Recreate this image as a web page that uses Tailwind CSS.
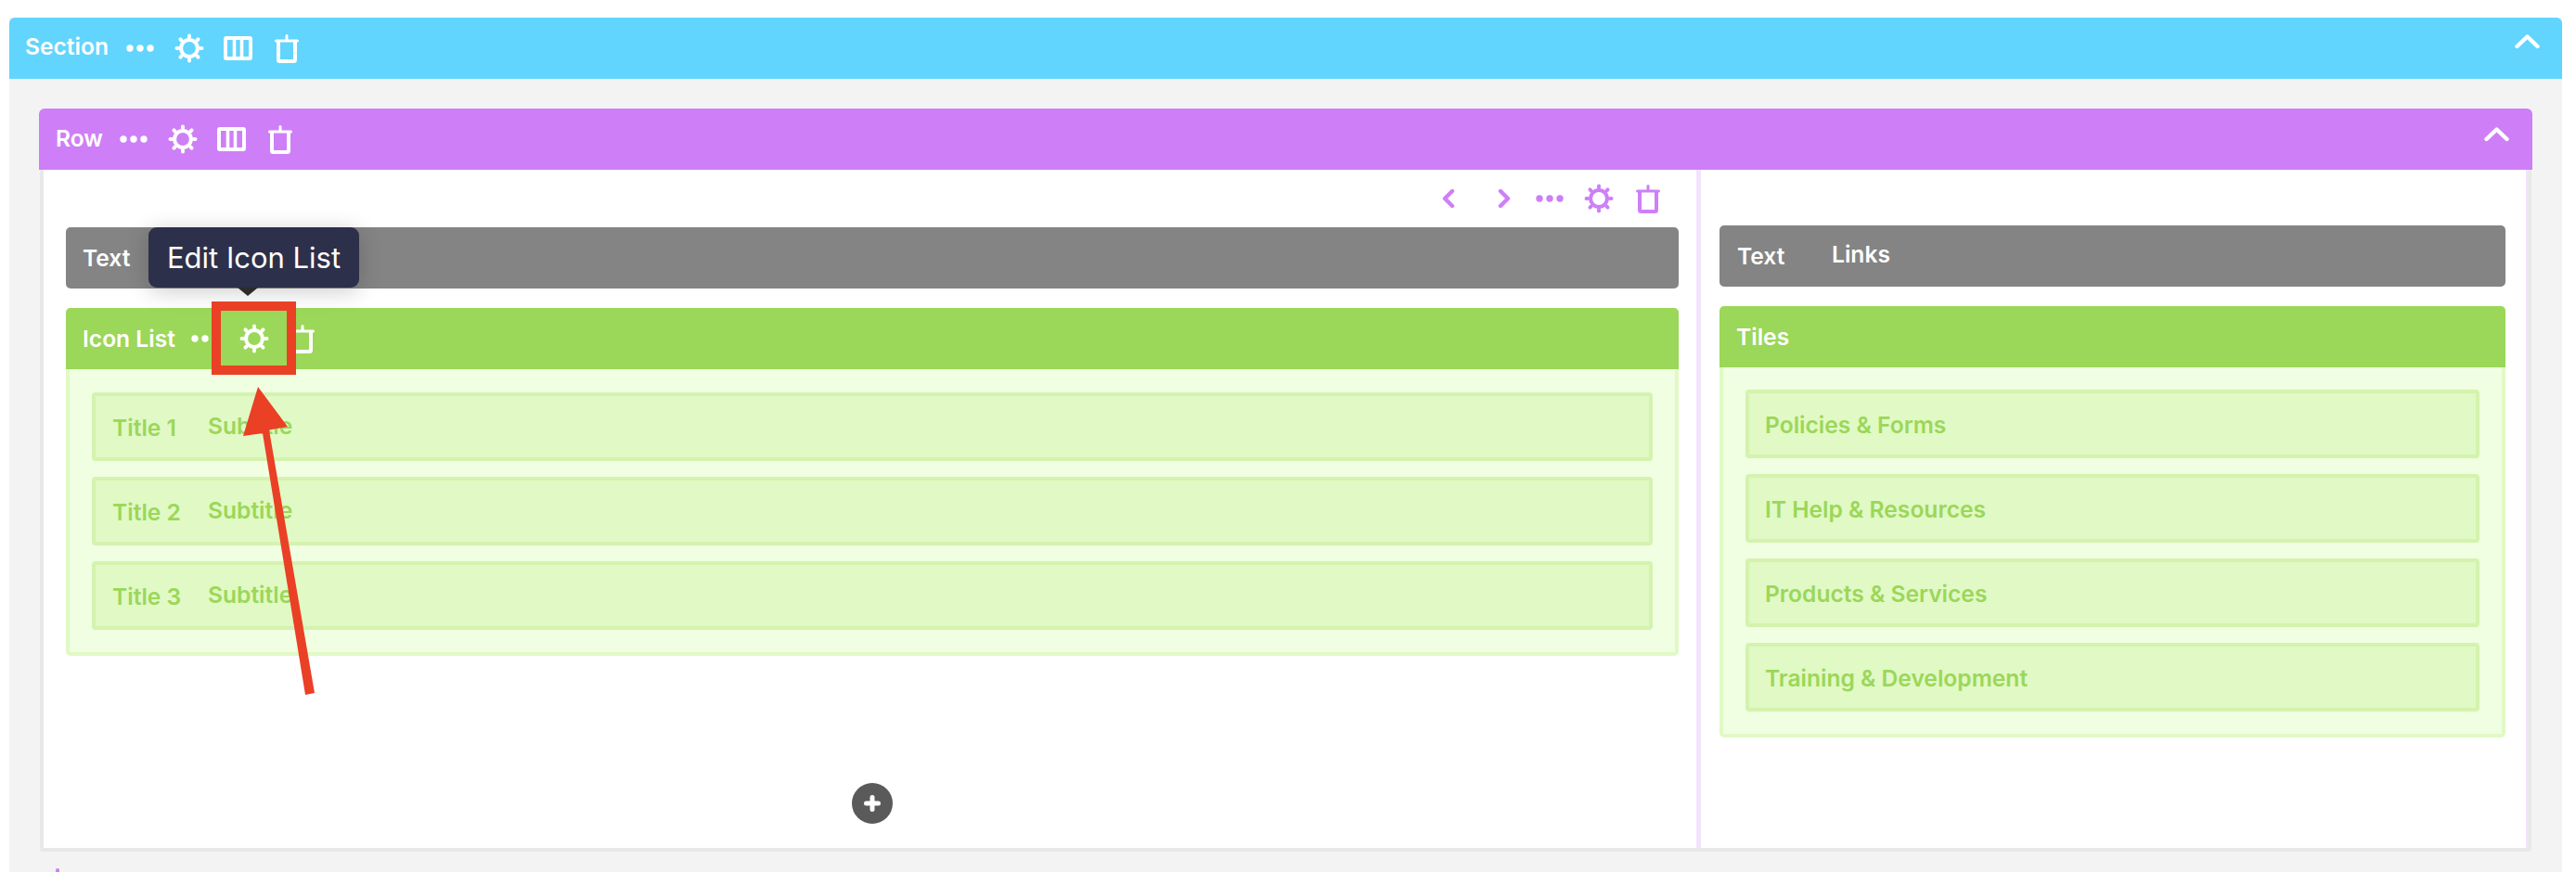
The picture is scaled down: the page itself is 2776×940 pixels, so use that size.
<!DOCTYPE html>
<html lang="en">
<head>
  <meta charset="UTF-8">
  <title>Edit Icon List</title>
  <script src="https://cdn.jsdelivr.net/npm/@tailwindcss/browser@4"></script>
</head>
<body class="bg-white font-['Inter',sans-serif] overflow-hidden">

  <!-- Shared icons -->
  <svg class="hidden">
    <symbol id="gear" viewBox="0 0 32 32">
      <circle cx="16" cy="16" r="8.9" fill="none" stroke="currentColor" stroke-width="4"/>
      <path d="M16 4V2.5M16 28V29.5M4 16H2.5M28 16H29.5M7.5 7.5L6.45 6.45M24.5 24.5L25.55 25.55M7.5 24.5L6.45 25.55M24.5 7.5L25.55 6.45" fill="none" stroke="currentColor" stroke-width="4" stroke-linecap="round"/>
    </symbol>
    <symbol id="cols" viewBox="0 0 31 26">
      <rect x="2" y="2" width="27" height="22" rx="1" fill="none" stroke="currentColor" stroke-width="4"/>
      <path d="M11.5 2V24M19.5 2V24" stroke="currentColor" stroke-width="3.6"/>
    </symbol>
    <symbol id="trash" viewBox="0 0 26 31">
      <path d="M1.5 7H24.5M13 1.5V6" fill="none" stroke="currentColor" stroke-width="3" stroke-linecap="round"/>
      <path d="M4 7V27.5Q4 29 5.5 29H20.5Q22 29 22 27.5V7" fill="none" stroke="currentColor" stroke-width="4"/>
    </symbol>
    <symbol id="dots" viewBox="0 0 30 10">
      <circle cx="4" cy="5" r="3.7" fill="currentColor"/><circle cx="15" cy="5" r="3.7" fill="currentColor"/><circle cx="26" cy="5" r="3.7" fill="currentColor"/>
    </symbol>
    <symbol id="up" viewBox="0 0 27 17">
      <path d="M2.5 14L13.5 3.5L24.5 14" fill="none" stroke="currentColor" stroke-width="4.4" stroke-linecap="round" stroke-linejoin="round"/>
    </symbol>
  </svg>

  <div class="relative w-[2776px] h-[940px]">
    <!-- Section -->
    <div class="absolute left-[10px] top-[19px] w-[2751px] h-[921px] bg-[#f3f3f3]">
      <div class="h-[66px] rounded-t-[6px] bg-[#61d5fd] text-white flex items-center pl-[17px]">
        <span class="text-[24.6px] font-semibold leading-none w-[109px] -mt-[3px]">Section</span>
        <svg class="w-[30px] h-[10px]"><use href="#dots"/></svg>
        <svg class="w-[32px] h-[32px] ml-[22px]"><use href="#gear"/></svg>
        <svg class="w-[31px] h-[26px] ml-[21px]"><use href="#cols"/></svg>
        <svg class="w-[26px] h-[31px] ml-[24px]"><use href="#trash"/></svg>
        <svg class="w-[27px] h-[17px] ml-auto mr-[24px] -mt-[16px]"><use href="#up"/></svg>
      </div>

      <!-- Row -->
      <div class="ml-[32px] mt-[32px] w-[2687px]">
        <div class="h-[66px] rounded-t-[6px] bg-[#ce7ff8] text-white flex items-center pl-[18px]">
          <span class="text-[24.6px] font-semibold leading-none w-[69px] -mt-[1px]">Row</span>
          <svg class="w-[30px] h-[10px]"><use href="#dots"/></svg>
          <svg class="w-[32px] h-[32px] ml-[22px]"><use href="#gear"/></svg>
          <svg class="w-[31px] h-[26px] ml-[21px]"><use href="#cols"/></svg>
          <svg class="w-[26px] h-[31px] ml-[24px]"><use href="#trash"/></svg>
          <svg class="w-[27px] h-[17px] ml-auto mr-[25px] -mt-[12px]"><use href="#up"/></svg>
        </div>

        <div class="mx-px h-[735px] flex bg-white border-x-4 border-b-4 border-[#e8e8e8] rounded-b-[4px]">
          <!-- Left column -->
          <div class="w-[1781px] h-full pl-[24px] pr-[19px] flex flex-col">
            <div class="h-[62px] flex items-center justify-end text-[#ce7ff8] pr-[20px]">
              <svg class="w-[14px] h-[22px] mr-[46px]" viewBox="0 0 14 22"><path d="M11 3L3 11L11 19" fill="none" stroke="currentColor" stroke-width="4.4" stroke-linecap="round" stroke-linejoin="round"/></svg>
              <svg class="w-[14px] h-[22px] mr-[27px]" viewBox="0 0 14 22"><path d="M3 3L11 11L3 19" fill="none" stroke="currentColor" stroke-width="4.4" stroke-linecap="round" stroke-linejoin="round"/></svg>
              <svg class="w-[30px] h-[10px]"><use href="#dots"/></svg>
              <svg class="w-[32px] h-[32px] ml-[22px]"><use href="#gear"/></svg>
              <svg class="w-[26px] h-[31px] ml-[24px]"><use href="#trash"/></svg>
            </div>

            <div class="h-[66px] shrink-0 rounded-[5px] bg-[#848484] text-white flex items-center pl-[18px]">
              <span class="text-[24.6px] font-semibold leading-none">Text</span>
            </div>

            <div class="mt-[21px] rounded-[5px] bg-[#e1f9c5] pb-[4px]">
              <div class="h-[66px] rounded-t-[5px] bg-[#9bd758] text-white flex items-center pl-[18px]">
                <span class="text-[24.6px] font-semibold leading-none w-[117px]">Icon List</span>
                <svg class="w-[30px] h-[10px]"><use href="#dots"/></svg>
                <svg class="w-[32px] h-[32px] ml-[22px]"><use href="#gear"/></svg>
                <svg class="w-[26px] h-[31px] ml-[23px]"><use href="#trash"/></svg>
              </div>
              <div class="mx-[4px] bg-[#f0fee2] px-[24px] pt-[25px] pb-[24px] flex flex-col gap-[17px] text-[#9bd758]">
                <div class="h-[74px] rounded-[4px] border-4 border-[#d4f3ae] bg-[#e1f9c5] flex items-center pl-[18px] text-[24.6px] font-semibold leading-none">
                  <span class="w-[103px] mt-[2px]">Title 1</span><span class="-mt-[2px]">Subtitle</span>
                </div>
                <div class="h-[74px] rounded-[4px] border-4 border-[#d4f3ae] bg-[#e1f9c5] flex items-center pl-[18px] text-[24.6px] font-semibold leading-none">
                  <span class="w-[103px] mt-[2px]">Title 2</span><span class="-mt-[2px]">Subtitle</span>
                </div>
                <div class="h-[74px] rounded-[4px] border-4 border-[#d4f3ae] bg-[#e1f9c5] flex items-center pl-[18px] text-[24.6px] font-semibold leading-none">
                  <span class="w-[103px] mt-[2px]">Title 3</span><span class="-mt-[2px]">Subtitle</span>
                </div>
              </div>
            </div>

            <button class="mt-auto mb-[26px] ml-[847px] w-[44px] h-[44px] rounded-full bg-[#5a5a5a] flex items-center justify-center">
              <svg class="w-[18px] h-[18px]" viewBox="0 0 18 18"><path d="M9 2.5V15.5M2.5 9H15.5" stroke="#fff" stroke-width="5" stroke-linecap="round"/></svg>
            </button>
          </div>

          <!-- Divider -->
          <div class="w-[5px] h-full bg-[#f3e3fd]"></div>

          <!-- Right column -->
          <div class="flex-1 h-full pl-[20px] pr-[22px] pt-[60px] border-r-2 border-[#f3e3fd]">
            <div class="h-[66px] rounded-[5px] bg-[#848484] text-white flex items-center pl-[19px]">
              <span class="text-[24.6px] font-semibold leading-none w-[102px]">Text</span>
              <span class="text-[24.6px] font-semibold leading-none -mt-[4px]">Links</span>
            </div>
            <div class="mt-[21px] rounded-[5px] bg-[#e1f9c5] pb-[4px]">
              <div class="h-[66px] rounded-t-[5px] bg-[#9bd758] text-white flex items-center pl-[18px]">
                <span class="text-[24.6px] font-semibold leading-none">Tiles</span>
              </div>
              <div class="mx-[4px] bg-[#f0fee2] px-[24px] pt-[24px] pb-[24px] flex flex-col gap-[17px] text-[#9bd758]">
                <div class="h-[74px] rounded-[4px] border-4 border-[#d4f3ae] bg-[#e1f9c5] flex items-center pl-[17px] pt-[3px] text-[24.6px] font-semibold leading-none">Policies &amp; Forms</div>
                <div class="h-[74px] rounded-[4px] border-4 border-[#d4f3ae] bg-[#e1f9c5] flex items-center pl-[17px] pt-[3px] text-[24.6px] font-semibold leading-none">IT Help &amp; Resources</div>
                <div class="h-[74px] rounded-[4px] border-4 border-[#d4f3ae] bg-[#e1f9c5] flex items-center pl-[17px] pt-[3px] text-[24.6px] font-semibold leading-none">Products &amp; Services</div>
                <div class="h-[74px] rounded-[4px] border-4 border-[#d4f3ae] bg-[#e1f9c5] flex items-center pl-[17px] pt-[3px] text-[24.6px] font-semibold leading-none">Training &amp; Development</div>
              </div>
            </div>
          </div>
        </div>

        <!-- Next row's icon peeking in at the bottom edge -->
        <div class="ml-[18px] mt-[18px] w-[4px] h-[4px] rounded-t-full bg-[#ce7ff8]"></div>
      </div>
    </div>

    <!-- Tooltip -->
    <div class="absolute left-[160px] top-[245px] w-[227px] h-[65px] rounded-[9px] bg-[#2d304a] text-white text-[31px] leading-none flex items-center justify-center shadow-[0_4px_24px_rgba(0,0,0,0.2)]">Edit Icon List</div>
    <svg class="absolute left-[255px] top-[310px] w-[24px] h-[9px]" viewBox="0 0 24 9"><path d="M1 0H23L12 9Z" fill="#2b2b2b"/></svg>

    <!-- Annotation -->
    <div class="absolute left-[228px] top-[325px] w-[91px] h-[79px] border-[10px] border-[#ea4025]"></div>
    <svg class="absolute left-0 top-0 w-[2776px] h-[940px] pointer-events-none" viewBox="0 0 2776 940">
      <path d="M278 417L310 460L290 463.5L339 747L329 749L283 467L262 470Z" fill="#ea4025"/>
    </svg>
  </div>
</body>
</html>
